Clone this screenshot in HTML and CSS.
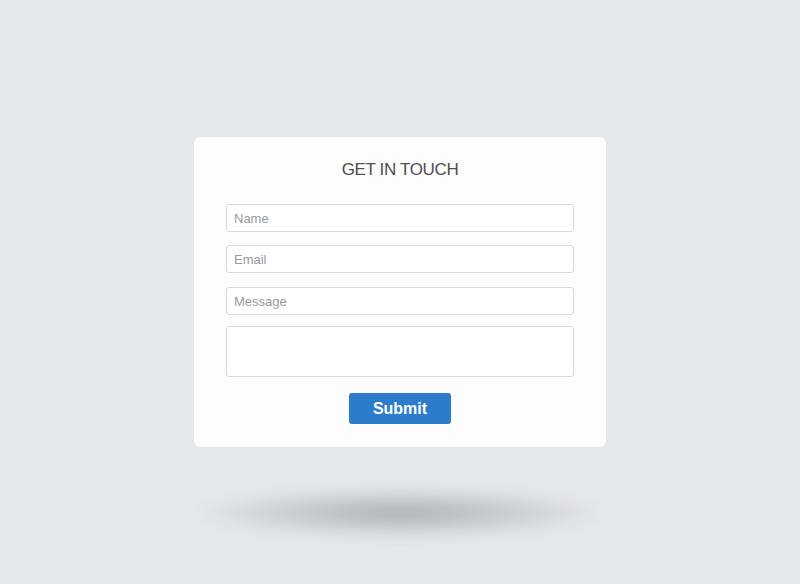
FILE: index.html
```html
<!DOCTYPE html>
<html lang="en">
<head>
<meta charset="utf-8">
<title>Get in touch</title>
<link rel="stylesheet" href="styles.css">
</head>
<body>
<main class="stage">
  <form class="card">
    <h1 class="title">GET IN TOUCH</h1>
    <input class="field field-name" type="text" placeholder="Name">
    <input class="field field-email" type="email" placeholder="Email">
    <input class="field field-message" type="text" placeholder="Message">
    <textarea class="field area"></textarea>
    <button class="submit" type="button">Submit</button>
  </form>
  <div class="floor-shadow"></div>
</main>
</body>
</html>
```
FILE: styles.css
```css
html, body {
  margin: 0;
  padding: 0;
  height: 100%;
}

body {
  background: #e6e9ec;
  font-family: "Liberation Sans", Arial, sans-serif;
  overflow: hidden;
}

.stage {
  display: flex;
  flex-direction: column;
  align-items: center;
  padding-top: 137px;
}

.card {
  width: 412px;
  box-sizing: border-box;
  background: #fdfdfd;
  border-radius: 6px;
  padding: 23px 32px 23px;
  display: flex;
  flex-direction: column;
  box-shadow: 0 0 3px rgba(0, 0, 0, 0.03);
}

.title {
  margin: 0 0 24px;
  font-size: 17px;
  line-height: 20px;
  font-weight: normal;
  color: #4d4d4d;
  text-align: center;
  letter-spacing: -0.35px;
}

.field {
  box-sizing: border-box;
  width: 100%;
  height: 28px;
  margin: 0;
  padding: 0 7px;
  border: 1px solid #d6dade;
  border-radius: 3px;
  background: #ffffff;
  font-family: "Liberation Sans", Arial, sans-serif;
  font-size: 13px;
  color: #555;
  outline: none;
}

.field::placeholder {
  color: #959a9f;
}

.field-name {
  margin-bottom: 13px;
}

.field-email {
  margin-bottom: 14px;
}

.field-message {
  margin-bottom: 11px;
}

.area {
  height: 51px;
  resize: none;
  display: block;
  margin-bottom: 16px;
}

.submit {
  align-self: center;
  width: 102px;
  height: 31px;
  border: none;
  border-radius: 3px;
  background: #2d7bcb;
  color: #ffffff;
  font-family: "Liberation Sans", Arial, sans-serif;
  font-weight: bold;
  font-size: 16px;
  padding: 0;
}

.floor-shadow {
  margin-top: 40px;
  width: 420px;
  height: 52px;
  border-radius: 50%;
  background: radial-gradient(ellipse at center, rgba(160, 165, 170, 0.85) 0%, rgba(175, 180, 185, 0.5) 40%, rgba(200, 204, 208, 0) 72%);
  filter: blur(7px);
}
```
